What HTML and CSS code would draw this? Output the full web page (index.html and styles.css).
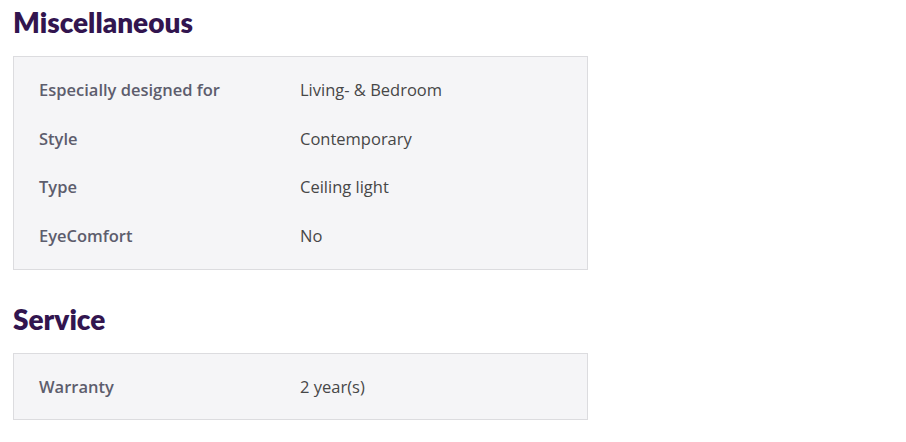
FILE: index.html
```html
<!DOCTYPE html>
<html lang="en">
<head>
<meta charset="utf-8">
<link rel="stylesheet" href="styles.css">
</head>
<body>
<main class="page">
  <section class="group">
    <h2 class="group-title">Miscellaneous</h2>
    <dl class="spec-box">
      <div class="spec-row"><dt>Especially designed for</dt><dd>Living- &amp; Bedroom</dd></div>
      <div class="spec-row"><dt>Style</dt><dd>Contemporary</dd></div>
      <div class="spec-row"><dt>Type</dt><dd>Ceiling light</dd></div>
      <div class="spec-row"><dt>EyeComfort</dt><dd>No</dd></div>
    </dl>
  </section>
  <section class="group">
    <h2 class="group-title">Service</h2>
    <dl class="spec-box">
      <div class="spec-row"><dt>Warranty</dt><dd>2 year(s)</dd></div>
    </dl>
  </section>
</main>
</body>
</html>
```
FILE: styles.css
```css
html, body {
  margin: 0;
  padding: 0;
  background: #ffffff;
}
.page {
  padding: 4px 0 0 13px;
  width: 575px;
  font-family: "Open Sans", "Liberation Sans", sans-serif;
}
.group-title {
  margin: 0;
  font-family: Lato, "Open Sans", sans-serif;
  font-weight: 800;
  font-size: 28px;
  line-height: 36px;
  color: #32154f;
}
.group + .group .group-title {
  margin-top: 31px;
}
.spec-box {
  margin: 16px 0 0 0;
  padding: 8px 0 9px 0;
  background: #f5f5f7;
  border: 1px solid #dcdcdf;
}
.spec-row {
  display: flex;
  align-items: center;
  height: 48.7px;
  font-size: 16.5px;
}
.spec-row dt {
  width: 261px;
  padding-left: 25px;
  font-weight: 600;
  color: #5d5d6d;
}
.spec-row dd {
  margin: 0;
  color: #474747;
}
```
